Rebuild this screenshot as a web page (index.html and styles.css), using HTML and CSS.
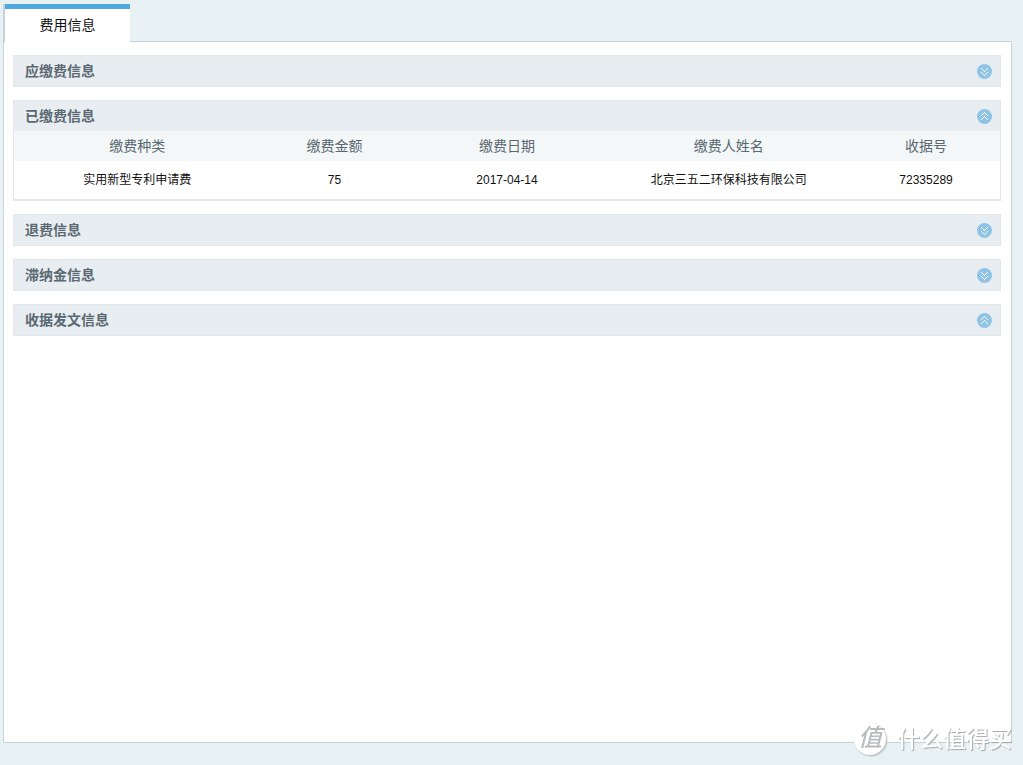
FILE: index.html
```html
<!DOCTYPE html>
<html lang="zh-CN">
<head>
<meta charset="utf-8">
<title>费用信息</title>
<link rel="stylesheet" href="styles.css">
</head>
<body>
<svg class="sprite" aria-hidden="true">
  <symbol id="down" viewBox="0 0 15 15">
    <circle cx="7.5" cy="7.5" r="7.5" fill="#8ec4e6"/>
    <path shape-rendering="crispEdges" fill="#fff" d="M4 4h1v1h-1zM5 5h1v1h-1zM6 6h1v1h-1zM7 7h1v1h-1zM8 6h1v1h-1zM9 5h1v1h-1zM10 4h1v1h-1zM4 8h1v1h-1zM5 9h1v1h-1zM6 10h1v1h-1zM7 11h1v1h-1zM8 10h1v1h-1zM9 9h1v1h-1zM10 8h1v1h-1z"/>
  </symbol>
  <symbol id="up" viewBox="0 0 15 15">
    <circle cx="7.5" cy="7.5" r="7.5" fill="#8ec4e6"/>
    <path shape-rendering="crispEdges" fill="#fff" d="M4 6h1v1h-1zM5 5h1v1h-1zM6 4h1v1h-1zM7 3h1v1h-1zM8 4h1v1h-1zM9 5h1v1h-1zM10 6h1v1h-1zM4 10h1v1h-1zM5 9h1v1h-1zM6 8h1v1h-1zM7 7h1v1h-1zM8 8h1v1h-1zM9 9h1v1h-1zM10 10h1v1h-1z"/>
  </symbol>
</svg>
<nav class="tabs"><button class="tab" type="button">费用信息</button></nav>
<main class="panel">
  <section class="block">
    <div class="head"><h2 class="title">应缴费信息</h2><button class="toggle" type="button" aria-label="展开应缴费信息"><svg class="icon"><use href="#down"/></svg></button></div>
  </section>
  <section class="block open">
    <div class="head"><h2 class="title">已缴费信息</h2><button class="toggle" type="button" aria-label="收起已缴费信息"><svg class="icon"><use href="#up"/></svg></button></div>
    <table class="fees">
      <colgroup><col class="wide"><col class="narrow"><col class="medium"><col class="wide"><col class="narrow"></colgroup>
      <thead><tr><th>缴费种类</th><th>缴费金额</th><th>缴费日期</th><th>缴费人姓名</th><th>收据号</th></tr></thead>
      <tbody><tr><td>实用新型专利申请费</td><td>75</td><td>2017-04-14</td><td>北京三五二环保科技有限公司</td><td>72335289</td></tr></tbody>
    </table>
  </section>
  <section class="block">
    <div class="head"><h2 class="title">退费信息</h2><button class="toggle" type="button" aria-label="展开退费信息"><svg class="icon"><use href="#down"/></svg></button></div>
  </section>
  <section class="block">
    <div class="head"><h2 class="title">滞纳金信息</h2><button class="toggle" type="button" aria-label="展开滞纳金信息"><svg class="icon"><use href="#down"/></svg></button></div>
  </section>
  <section class="block">
    <div class="head"><h2 class="title">收据发文信息</h2><button class="toggle" type="button" aria-label="收起收据发文信息"><svg class="icon"><use href="#up"/></svg></button></div>
  </section>
</main>
<div class="watermark"><span class="seal">值</span><span class="brand">什么值得买</span></div>
</body>
</html>
```
FILE: styles.css
```css
* { box-sizing: border-box; }
body {
  margin: 0;
  min-height: 100vh;
  padding: 4px 11px 22px 3px;
  display: flex;
  flex-direction: column;
  background: #e8f1f4;
  color: #111;
  font-family: "Liberation Sans", "Noto Sans CJK SC", sans-serif;
  font-size: 12px;
}
.sprite { position: absolute; width: 0; height: 0; }
button { margin: 0; padding: 0; border: 0; background: none; font: inherit; color: inherit; cursor: pointer; }
.tabs { display: flex; border-left: 2px solid #c5d3dc; }
.tab {
  position: relative;
  width: 125px;
  height: 38px;
  margin-bottom: -1px;
  padding-bottom: 1px;
  border-top: 5px solid #4fa8e0;
  background: #fff;
  font-size: 14px;
  line-height: 30px;
}
.panel {
  flex: 1;
  display: flex;
  flex-direction: column;
  gap: 13px;
  padding: 13px 10px 13px 9px;
  border: 1px solid #c5d3dc;
  background: #fff;
}
.block { border: 1px solid #e0e8ec; }
.open { border-bottom-width: 2px; }
.head {
  display: flex;
  align-items: center;
  justify-content: space-between;
  height: 30px;
  padding: 0 8px 0 11px;
  background: #e8edf1;
}
.title { margin: 0; color: #5a6872; font-size: 14px; line-height: 30px; font-weight: bold; }
.toggle, .icon { display: block; width: 15px; height: 15px; }
.fees { width: 100%; table-layout: fixed; border-collapse: collapse; text-align: center; }
.wide { width: 25%; }
.medium { width: 20%; }
.narrow { width: 15%; }
.fees th { height: 30px; padding: 0; background: #f3f7f8; color: #5a6872; font-size: 14px; line-height: 30px; font-weight: normal; }
.fees td { height: 38px; padding: 0; line-height: 38px; }
.watermark {
  position: fixed;
  right: 11px;
  bottom: 10px;
  display: flex;
  align-items: center;
  gap: 11px;
  color: #fff;
}
.seal {
  width: 32px;
  height: 32px;
  border-radius: 50%;
  background: #fff;
  box-shadow: 1px 1px 2px #aab2b5;
  color: #b9bcbd;
  font-size: 24px;
  font-weight: 500;
  font-style: italic;
  line-height: 30px;
  text-align: center;
}
.brand { font-size: 23px; font-weight: 500; line-height: 32px; text-shadow: 1px 1px 1px #a4a8aa; }
```
